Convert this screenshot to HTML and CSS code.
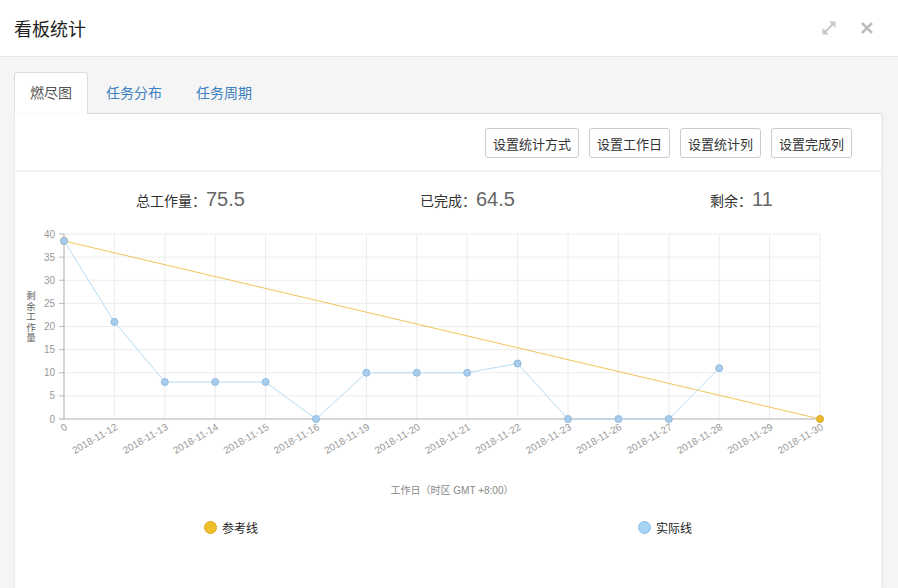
FILE: index.html
```html
<!DOCTYPE html>
<html lang="zh">
<head>
<meta charset="utf-8">
<title>看板统计</title>
<link rel="stylesheet" href="styles.css">
</head>
<body>
<div class="modal">
  <header class="modal-header">
    <h1 class="modal-title">看板统计</h1>
    <div class="header-tools">
      <svg class="icon-expand" width="18" height="18" viewBox="0 0 18 18">
        <path d="M3.5 14.5 L14.5 3.5" />
        <path d="M9 2.5 H15.5 V9 Z" class="fill" />
        <path d="M2.5 9 V15.5 H9 Z" class="fill" />
      </svg>
      <svg class="icon-close" width="14" height="14" viewBox="0 0 14 14">
        <path d="M2 2 L12 12 M12 2 L2 12" />
      </svg>
    </div>
  </header>

  <div class="modal-body">
    <ul class="nav-tabs">
      <li class="tab active">燃尽图</li>
      <li class="tab">任务分布</li>
      <li class="tab">任务周期</li>
    </ul>

    <div class="toolbar">
      <button class="btn">设置统计方式</button>
      <button class="btn">设置工作日</button>
      <button class="btn">设置统计列</button>
      <button class="btn">设置完成列</button>
    </div>

    <div class="chart-card">
      <div class="summary">
        <div class="stat"><span class="stat-label">总工作量：</span><span class="stat-value">75.5</span></div>
        <div class="stat"><span class="stat-label">已完成：</span><span class="stat-value">64.5</span></div>
        <div class="stat"><span class="stat-label">剩余：</span><span class="stat-value">11</span></div>
      </div>

      <svg class="chart" width="868" height="290" viewBox="0 0 868 290">
        <g class="grid">
          <line x1="50" y1="14" x2="806" y2="14"/>
          <line x1="50" y1="37.125" x2="806" y2="37.125"/>
          <line x1="50" y1="60.25" x2="806" y2="60.25"/>
          <line x1="50" y1="83.375" x2="806" y2="83.375"/>
          <line x1="50" y1="106.5" x2="806" y2="106.5"/>
          <line x1="50" y1="129.625" x2="806" y2="129.625"/>
          <line x1="50" y1="152.75" x2="806" y2="152.75"/>
          <line x1="50" y1="175.875" x2="806" y2="175.875"/>
          <line x1="100.4" y1="14" x2="100.4" y2="199"/>
          <line x1="150.8" y1="14" x2="150.8" y2="199"/>
          <line x1="201.2" y1="14" x2="201.2" y2="199"/>
          <line x1="251.6" y1="14" x2="251.6" y2="199"/>
          <line x1="302" y1="14" x2="302" y2="199"/>
          <line x1="352.4" y1="14" x2="352.4" y2="199"/>
          <line x1="402.8" y1="14" x2="402.8" y2="199"/>
          <line x1="453.2" y1="14" x2="453.2" y2="199"/>
          <line x1="503.6" y1="14" x2="503.6" y2="199"/>
          <line x1="554" y1="14" x2="554" y2="199"/>
          <line x1="604.4" y1="14" x2="604.4" y2="199"/>
          <line x1="654.8" y1="14" x2="654.8" y2="199"/>
          <line x1="705.2" y1="14" x2="705.2" y2="199"/>
          <line x1="755.6" y1="14" x2="755.6" y2="199"/>
          <line x1="806" y1="14" x2="806" y2="199"/>
        </g>

        <g class="tick">
          <line x1="45" y1="14" x2="50" y2="14"/>
          <line x1="45" y1="37.125" x2="50" y2="37.125"/>
          <line x1="45" y1="60.25" x2="50" y2="60.25"/>
          <line x1="45" y1="83.375" x2="50" y2="83.375"/>
          <line x1="45" y1="106.5" x2="50" y2="106.5"/>
          <line x1="45" y1="129.625" x2="50" y2="129.625"/>
          <line x1="45" y1="152.75" x2="50" y2="152.75"/>
          <line x1="45" y1="175.875" x2="50" y2="175.875"/>
        </g>

        <line class="axis-x" x1="45" y1="199" x2="806" y2="199"/>
        <line class="axis-y" x1="50" y1="14" x2="50" y2="199"/>

        <g class="ylab">
          <text x="41" y="17.5">40</text>
          <text x="41" y="40.6">35</text>
          <text x="41" y="63.7">30</text>
          <text x="41" y="86.9">25</text>
          <text x="41" y="110">20</text>
          <text x="41" y="133.1">15</text>
          <text x="41" y="156.2">10</text>
          <text x="41" y="179.4">5</text>
          <text x="41" y="202.5">0</text>
        </g>

        <g class="yname">
          <text x="17" y="79">剩</text>
          <text x="17" y="89.5">余</text>
          <text x="17" y="100">工</text>
          <text x="17" y="110.5">作</text>
          <text x="17" y="121">量</text>
        </g>

        <g class="xlab">
          <text x="54" y="209" transform="rotate(-30 54 209)">0</text>
          <text x="104.4" y="209" transform="rotate(-30 104.4 209)">2018-11-12</text>
          <text x="154.8" y="209" transform="rotate(-30 154.8 209)">2018-11-13</text>
          <text x="205.2" y="209" transform="rotate(-30 205.2 209)">2018-11-14</text>
          <text x="255.6" y="209" transform="rotate(-30 255.6 209)">2018-11-15</text>
          <text x="306" y="209" transform="rotate(-30 306 209)">2018-11-16</text>
          <text x="356.4" y="209" transform="rotate(-30 356.4 209)">2018-11-19</text>
          <text x="406.8" y="209" transform="rotate(-30 406.8 209)">2018-11-20</text>
          <text x="457.2" y="209" transform="rotate(-30 457.2 209)">2018-11-21</text>
          <text x="507.6" y="209" transform="rotate(-30 507.6 209)">2018-11-22</text>
          <text x="558" y="209" transform="rotate(-30 558 209)">2018-11-23</text>
          <text x="608.4" y="209" transform="rotate(-30 608.4 209)">2018-11-26</text>
          <text x="658.8" y="209" transform="rotate(-30 658.8 209)">2018-11-27</text>
          <text x="709.2" y="209" transform="rotate(-30 709.2 209)">2018-11-28</text>
          <text x="759.6" y="209" transform="rotate(-30 759.6 209)">2018-11-29</text>
          <text x="810" y="209" transform="rotate(-30 810 209)">2018-11-30</text>
        </g>

        <text class="xname" x="438" y="274">工作日（时区 GMT +8:00）</text>

        <line class="ref-line" x1="50" y1="20.94" x2="806" y2="199"/>
        <circle class="ref-dot" cx="50" cy="20.94" r="3.5"/>
        <circle class="ref-dot" cx="806" cy="199" r="3.5"/>

        <polyline class="act-line" points="50,20.94 100.4,101.88 150.8,162 201.2,162 251.6,162 302,199 352.4,152.75 402.8,152.75 453.2,152.75 503.6,143.5 554,199 604.4,199 654.8,199 705.2,148.13"/>
        <g class="act-dot">
          <circle cx="50" cy="20.94" r="3.5"/>
          <circle cx="100.4" cy="101.88" r="3.5"/>
          <circle cx="150.8" cy="162" r="3.5"/>
          <circle cx="201.2" cy="162" r="3.5"/>
          <circle cx="251.6" cy="162" r="3.5"/>
          <circle cx="302" cy="199" r="3.5"/>
          <circle cx="352.4" cy="152.75" r="3.5"/>
          <circle cx="402.8" cy="152.75" r="3.5"/>
          <circle cx="453.2" cy="152.75" r="3.5"/>
          <circle cx="503.6" cy="143.5" r="3.5"/>
          <circle cx="554" cy="199" r="3.5"/>
          <circle cx="604.4" cy="199" r="3.5"/>
          <circle cx="654.8" cy="199" r="3.5"/>
          <circle cx="705.2" cy="148.13" r="3.5"/>
        </g>
      </svg>

      <div class="legend">
        <div class="legend-item"><span class="dot dot-ref"></span>参考线</div>
        <div class="legend-item"><span class="dot dot-act"></span>实际线</div>
      </div>
    </div>
  </div>
</div>
</body>
</html>
```

FILE: styles.css
```css
html, body {
  margin: 0;
  padding: 0;
  height: 100%;
  overflow: hidden;
}

body {
  background: #f5f5f5;
  font-family: "Liberation Sans", "Noto Sans CJK SC", sans-serif;
  color: #333;
}

.modal {
  height: 100%;
  display: flex;
  flex-direction: column;
}

.modal-header {
  height: 56px;
  flex: none;
  background: #fff;
  border-bottom: 1px solid #e5e5e5;
  display: flex;
  align-items: center;
  justify-content: space-between;
  padding: 0 24px 0 14px;
}

.modal-title {
  margin: 0;
  font-size: 18px;
  font-weight: normal;
  color: #222;
}

.header-tools {
  display: flex;
  align-items: center;
  gap: 22px;
}

.icon-expand path {
  stroke: #c8c8c8;
  stroke-width: 2;
  fill: none;
}

.icon-expand path.fill {
  fill: #c8c8c8;
  stroke: none;
}

.icon-close path {
  stroke: #bdbdbd;
  stroke-width: 2.6;
  fill: none;
}

.modal-body {
  flex: 1;
  display: flex;
  flex-direction: column;
  padding: 15px 16px 0 14px;
}

.nav-tabs {
  list-style: none;
  margin: 0;
  padding: 0;
  display: flex;
  gap: 2px;
  border-bottom: 1px solid #dddddd;
}

.tab {
  padding: 10px 15px;
  font-size: 14px;
  line-height: 20px;
  color: #3c80c0;
  border: 1px solid transparent;
  border-radius: 3px 3px 0 0;
  margin-bottom: -1px;
}

.tab.active {
  background: #fff;
  color: #555;
  border-color: #dddddd #dddddd #fff;
}

.toolbar {
  background: #fff;
  display: flex;
  justify-content: flex-end;
  gap: 10px;
  padding: 14px 29px 12px;
  border-left: 1px solid #ececec;
  border-right: 1px solid #ececec;
  box-shadow: 1px 0 3px rgba(0, 0, 0, 0.05);
}

.btn {
  height: 30px;
  padding: 0 7px;
  font-family: inherit;
  font-size: 13px;
  color: #333;
  background: #fff;
  border: 1px solid #cccccc;
  border-radius: 3px;
}

.chart-card {
  flex: 1;
  margin-top: 2px;
  background: #fff;
  border-left: 1px solid #ececec;
  border-right: 1px solid #ececec;
  box-shadow: 1px 0 3px rgba(0, 0, 0, 0.05);
  padding-top: 14px;
}

.summary {
  display: grid;
  grid-template-columns: 284px 290px auto;
  padding-left: 121px;
  height: 26px;
  align-items: center;
}

.stat-label {
  font-size: 14px;
  color: #333;
}

.stat-value {
  font-size: 20px;
  color: #666;
}

.chart {
  display: block;
  margin-left: -1px;
  margin-top: 8px;
}

.grid line {
  stroke: #ececec;
  stroke-width: 1;
}

.tick line {
  stroke: #bbb;
  stroke-width: 1;
}

.axis-x {
  stroke: #c8c8c8;
  stroke-width: 1.5;
}

.axis-y {
  stroke: #aaa;
  stroke-width: 1;
}

.ylab text {
  font-size: 10px;
  fill: #999;
  text-anchor: end;
}

.yname text {
  font-size: 9.5px;
  fill: #666;
  text-anchor: middle;
}

.xlab text {
  font-size: 10px;
  fill: #999;
  text-anchor: end;
}

.xname {
  font-size: 10px;
  fill: #888;
  text-anchor: middle;
}

.ref-line {
  stroke: #efc45a;
  stroke-width: 1;
}

.ref-dot {
  fill: #e8b92a;
  stroke: #d8a920;
  stroke-width: 1;
}

.act-line {
  fill: none;
  stroke: #b3dcf3;
  stroke-width: 1;
}

.act-dot circle {
  fill: #a8cdec;
  stroke: #92bbe0;
  stroke-width: 1;
}

.legend {
  display: flex;
  justify-content: space-between;
  align-items: center;
  height: 34px;
  padding: 0 189px 0 189px;
}

.legend-item {
  display: flex;
  align-items: center;
  gap: 5px;
  font-size: 12px;
  color: #222;
}

.dot {
  width: 11px;
  height: 11px;
  border-radius: 50%;
  display: inline-block;
}

.dot-ref {
  background: #f0bf2c;
  border: 1px solid #d8a81e;
}

.dot-act {
  background: #a7d3f5;
  border: 1px solid #8cbde6;
}
```
